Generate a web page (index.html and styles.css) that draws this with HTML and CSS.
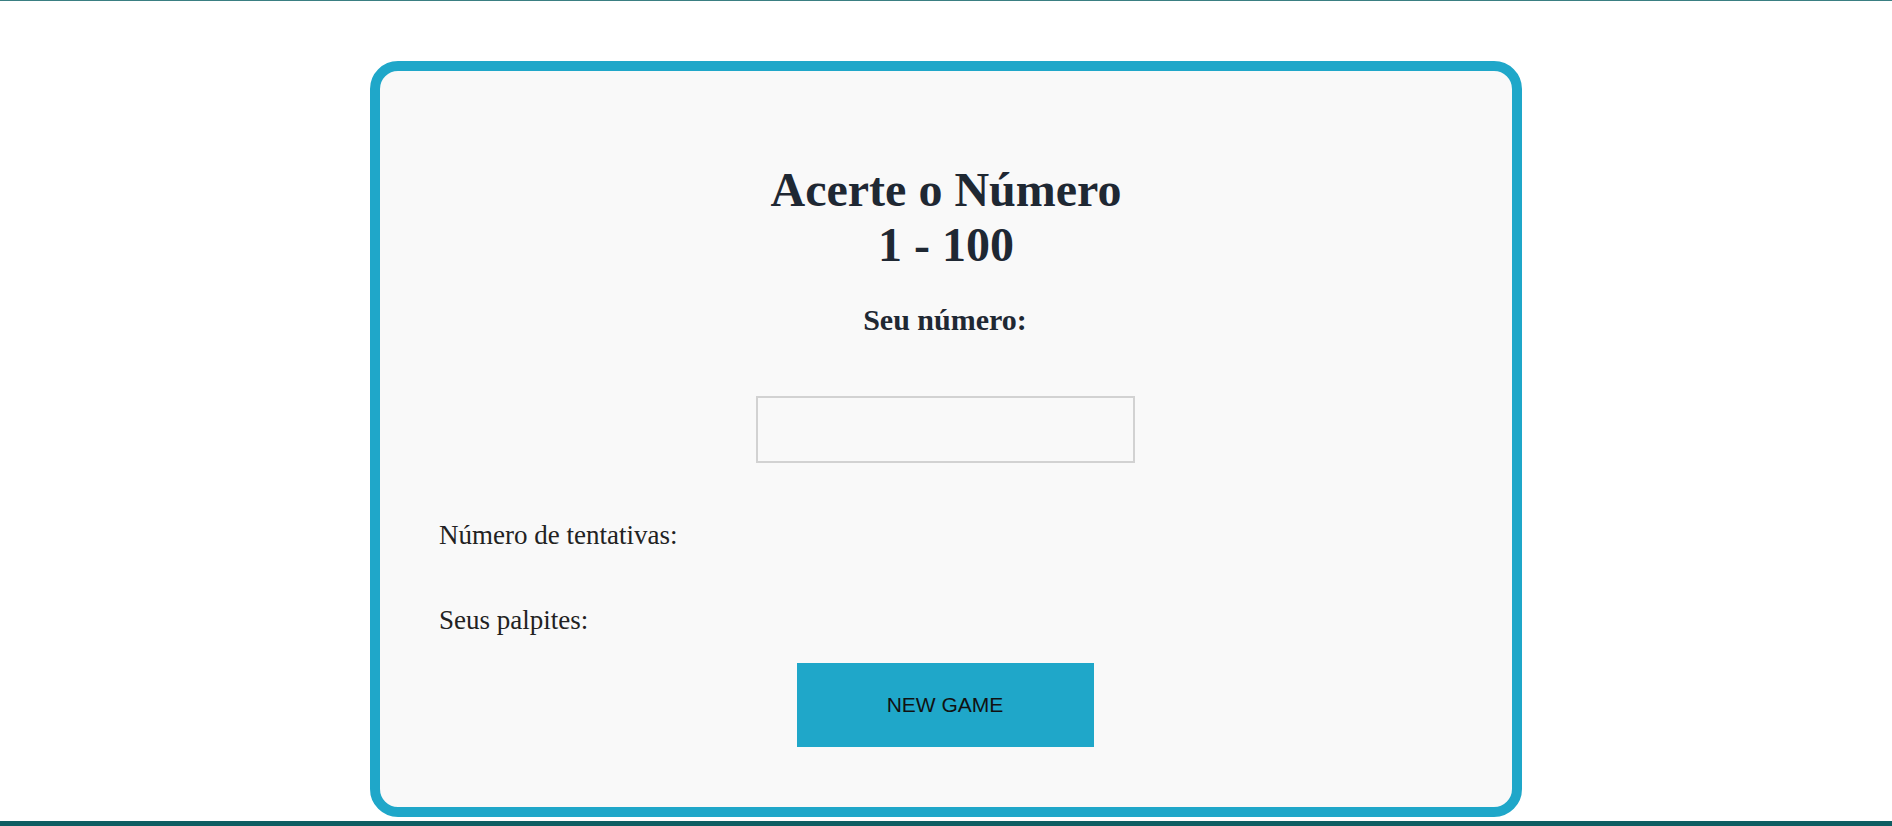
FILE: index.html
```html
<!DOCTYPE html>
<html lang="pt-BR">
<head>
<meta charset="utf-8">
<title>Acerte o Número</title>
<link rel="stylesheet" href="styles.css">
</head>
<body>
<div class="topline"></div>
<main class="page">
  <section class="card">
    <h1 class="title">Acerte o Número<br>1 - 100</h1>
    <h2 class="label">Seu número:</h2>
    <div class="input-row"><input class="guess" type="text"></div>
    <p class="info info-first">Número de tentativas:</p>
    <p class="info info-second">Seus palpites:</p>
    <div class="btn-row"><button class="btn">NEW GAME</button></div>
  </section>
</main>
<footer class="footer"></footer>
</body>
</html>
```

FILE: styles.css
```css
html, body {
  margin: 0;
  padding: 0;
  background: #ffffff;
  font-family: "Liberation Serif", "Times New Roman", serif;
  color: #1f2833;
}
body {
  height: 826px;
  overflow: hidden;
  display: flex;
  flex-direction: column;
}
.topline {
  height: 1px;
  background: #3a7f82;
}
.page {
  display: flex;
  justify-content: center;
  padding-top: 60px;
  height: 760px;
}
.card {
  box-sizing: border-box;
  width: 1152px;
  height: 756px;
  border: 10px solid #1fa7c9;
  border-radius: 28px;
  background: #f9f9f9;
  padding: 0 61px 0 59px;
}
.title {
  margin: 91px 0 0;
  padding-left: 2px;
  text-align: center;
  font-size: 48px;
  line-height: 55px;
  font-weight: bold;
}
.label {
  margin: 32px 0 0;
  text-align: center;
  font-size: 30px;
  line-height: 32px;
  font-weight: bold;
}
.input-row {
  display: flex;
  justify-content: center;
  margin-top: 60px;
}
.guess {
  box-sizing: border-box;
  width: 379px;
  height: 67px;
  border: 2px solid #d2d2d2;
  background: #f9f9f9;
  outline: none;
}
.info {
  margin: 0;
  font-size: 27px;
  line-height: 28px;
  color: #222;
}
.info-first {
  margin-top: 58px;
}
.info-second {
  margin-top: 57px;
}
.btn-row {
  display: flex;
  justify-content: center;
  margin-top: 29px;
}
.btn {
  width: 297px;
  height: 84px;
  border: none;
  background: #1fa7c9;
  color: #111;
  font-family: "Liberation Sans", Arial, sans-serif;
  font-size: 21px;
  cursor: pointer;
}
.footer {
  flex: 1;
  background: #0e5d62;
}
```
